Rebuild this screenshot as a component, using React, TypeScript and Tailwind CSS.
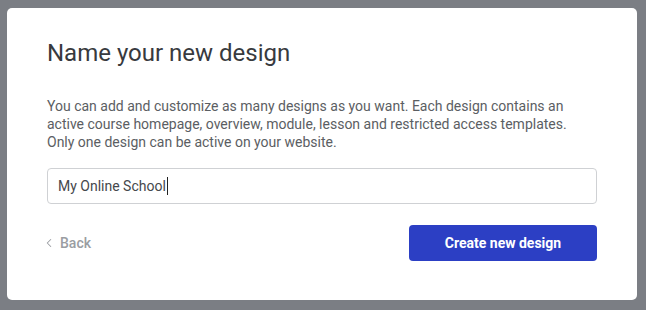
import { ChevronLeft } from 'lucide-react';

export default function App() {
  return (
    <div
      className="flex h-[310px] w-[646px] bg-[#7b7e84] pl-[7px] pr-[9px] pt-[8px] pb-[10px]"
      style={{ fontFamily: 'Roboto, sans-serif' }}
    >
      <div className="flex flex-1 flex-col rounded-[5px] bg-white px-[40px] pt-[29px]">
        <h1 className="text-[24px] leading-[32px] text-[#383a3e]">Name your new design</h1>
        <p className="mt-[28px] text-[14px] leading-[18px] text-[#5b5e63]">
          You can add and customize as many designs as you want. Each design contains an
          <br />
          active course homepage, overview, module, lesson and restricted access templates.
          <br />
          Only one design can be active on your website.
        </p>
        <div className="mt-[17px] flex h-[36px] items-center rounded-[4px] border border-[#cfd1d4] px-[10px] text-[14px] text-[#45484c]">
          My Online School
          <span className="ml-[1px] h-[18px] w-[1px] bg-[#222]" />
        </div>
        <div className="mt-[21px] flex items-center justify-between">
          <button className="flex items-center gap-[4px] text-[14px] font-medium text-[#9a9da2]">
            <ChevronLeft size={14} strokeWidth={1.75} className="-ml-[5px]" />
            Back
          </button>
          <button className="h-[36px] w-[188px] rounded-[4px] bg-[#2c3fc4] text-[14px] font-bold text-white">
            Create new design
          </button>
        </div>
      </div>
    </div>
  );
}
